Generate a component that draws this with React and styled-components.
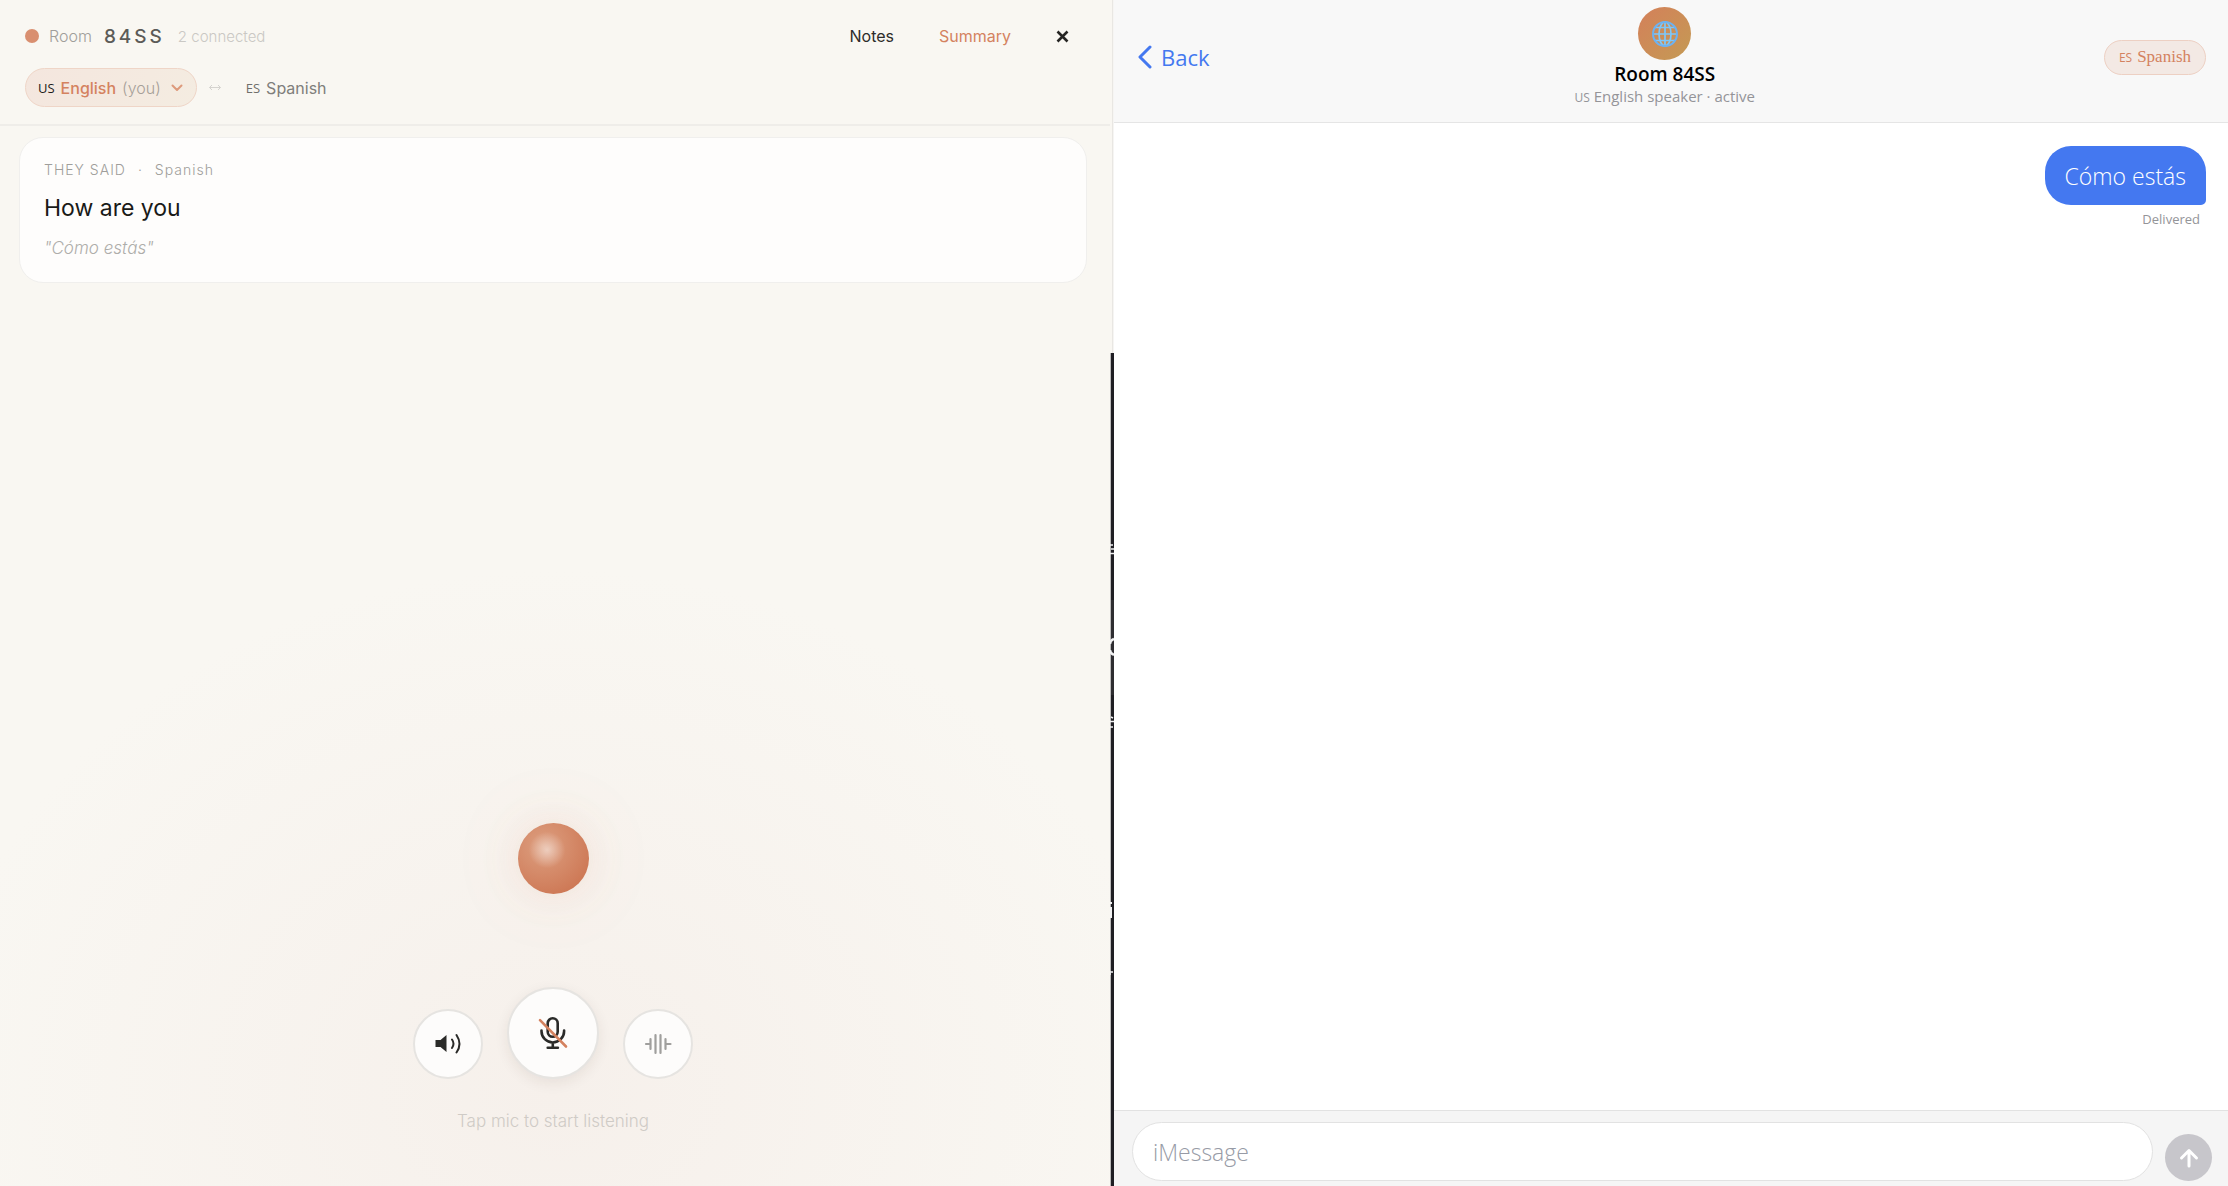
import React from 'react';
import styled, { createGlobalStyle } from 'styled-components';

const GlobalStyle = createGlobalStyle`
    *, *::before, *::after {
        box-sizing: border-box;
    }
    :root {
        --accent: #d4825f;
        --cream: #f9f7f2;
        --blue: #4478f0;
        --ui-font: Inter, "Liberation Sans", sans-serif;
        --phone-font: "Open Sans", "Noto Sans", sans-serif;
    }
    body {
        margin: 0;
    }
    button, input {
        font: inherit;
        color: inherit;
        padding: 0;
        border: none;
        background: none;
    }
    button {
        cursor: pointer;
    }
    svg {
        display: block;
    }
`;

const App = () => {
    return (
        <>
            <GlobalStyle />
            <Split>
                <TranslatorPane />
                <Seam />
                <PhonePane />
            </Split>
        </>
    );
};

const TranslatorPane = () => {
    return (
        <Translator>
            <TopBar>
                <RoomRow>
                    <StatusDot />
                    <RoomLabel>Room</RoomLabel>
                    <RoomCode>84SS</RoomCode>
                    <Connected>2 connected</Connected>
                    <Actions>
                        <TextButton type="button">Notes</TextButton>
                        <TextButton type="button" $accent>Summary</TextButton>
                        <CloseButton type="button" aria-label="Close">
                            <svg width="13" height="13" viewBox="0 0 13 13" fill="none" stroke="currentColor" strokeWidth="2.600">
                                <path d="M1.500 1.500 11.500 11.500M11.500 1.500 1.500 11.500" />
                            </svg>
                        </CloseButton>
                    </Actions>
                </RoomRow>
                <LanguageRow>
                    <LanguagePill type="button">
                        <Flag>US</Flag>
                        <strong>English</strong>
                        <span>(you)</span>
                        <svg width="12" height="8" viewBox="0 0 12 8" fill="none" stroke="currentColor" strokeWidth="2" strokeLinecap="round" strokeLinejoin="round">
                            <path d="M1.500 1.500 6 6l4.500-4.500" />
                        </svg>
                    </LanguagePill>
                    <Swap width="12" height="7" viewBox="0 0 12 7" fill="none" stroke="currentColor">
                        <path d="M.5 3.500h11M3 1 .5 3.500 3 6M9 1l2.500 2.500L9 6" />
                    </Swap>
                    <OtherLanguage>
                        <Flag $muted>ES</Flag>
                        Spanish
                    </OtherLanguage>
                </LanguageRow>
            </TopBar>
            <Feed>
                <Card>
                    <CardMeta>
                        <span>THEY SAID</span>
                        <span>·</span>
                        <span>Spanish</span>
                    </CardMeta>
                    <Translation>How are you</Translation>
                    <Original>"Cómo estás"</Original>
                </Card>
            </Feed>
            <Dock>
                <Orb />
                <Controls>
                    <RoundButton type="button" aria-label="Speaker">
                        <svg width="28" height="22" viewBox="0 0 28 22" fill="none" stroke="currentColor" strokeWidth="2" strokeLinecap="round">
                            <path d="M1.500 7h5l6-5v17l-6-5h-5z" fill="currentColor" stroke="none" />
                            <path d="M18 6.500q3 4.300 0 8.500M22.500 2q6 9 0 17.500" />
                        </svg>
                    </RoundButton>
                    <MicButton type="button" aria-label="Microphone">
                        <svg width="30" height="34" viewBox="0 0 30 34" fill="none" stroke="currentColor" strokeWidth="2.600" strokeLinecap="round">
                            <rect x="9.700" y="2.300" width="10" height="18.400" rx="5" />
                            <path d="M3.500 14.500v.7a11.300 11.300 0 0 0 22.600 0v-.7M14.800 26.500v5M9.700 31.700h10.200" />
                            <path d="M2 4.200 28 30.500" stroke="#d4825f" />
                        </svg>
                    </MicButton>
                    <RoundButton type="button" aria-label="Waveform" $muted>
                        <svg width="28" height="22" viewBox="0 0 28 22" fill="none" stroke="currentColor" strokeWidth="2.200" strokeLinecap="round">
                            <path d="M2 11h4.500M6.500 6v10M11.500 2v18M16.500 2v18M21.500 6v10M21.500 11h5" />
                        </svg>
                    </RoundButton>
                </Controls>
                <Hint>Tap mic to start listening</Hint>
            </Dock>
        </Translator>
    );
};

// the gap between both windows, dark where the desktop shows through
const Seam = () => {
    return (
        <SeamLine aria-hidden="true">
            <svg width="4" height="640" viewBox="0 0 4 640" fill="none" stroke="#f2f2f3">
                <rect x="1" y="247" width="3" height="95" fill="#2e2d31" stroke="none" />
                <path d="M0 192h3M1 196h3M0 200.500h4" strokeWidth="1.500" />
                <path d="M4 286Q0 287.500 0 291M0 297q0 3 4 5" strokeWidth="2.500" />
                <path d="M1 364l2 1M0 368.500h4M0 374h3" strokeWidth="1.500" />
                <path d="M1 549v2M1 554v11" strokeWidth="2" />
                <path d="M0 619h3M0 621h1" strokeWidth="1.500" />
            </svg>
        </SeamLine>
    );
};

const PhonePane = () => {
    return (
        <Phone>
            <PhoneHeader>
                <BackButton type="button">
                    <svg width="14" height="24" viewBox="0 0 14 24" fill="none" stroke="currentColor" strokeWidth="3" strokeLinecap="round" strokeLinejoin="round">
                        <path d="M12 2 2 12l10 10" />
                    </svg>
                    Back
                </BackButton>
                <Contact>
                    <Avatar>
                        <svg width="26" height="26" viewBox="0 0 26 26" fill="none" stroke="#7cc8fb" strokeWidth="1.700">
                            <path d="M13 1v24M1 13h24M3 6.500h20M3 19.500h20" />
                            <ellipse cx="13" cy="13" rx="6" ry="12" />
                            <circle cx="13" cy="13" r="12" stroke="#6cb2f2" strokeWidth="2" />
                        </svg>
                    </Avatar>
                    <ContactName>Room 84SS</ContactName>
                    <ContactStatus><small>US</small> English speaker · active</ContactStatus>
                </Contact>
                <LanguageTag type="button">
                    <small>ES</small>
                    Spanish
                </LanguageTag>
            </PhoneHeader>
            <Messages>
                <Bubble>Cómo estás</Bubble>
                <Receipt>Delivered</Receipt>
            </Messages>
            <Composer>
                <MessageInput type="text" placeholder="iMessage" aria-label="iMessage" />
                <SendButton type="button" aria-label="Send">
                    <svg width="20" height="20" viewBox="0 0 20 20" fill="none" stroke="currentColor" strokeWidth="3" strokeLinecap="round" strokeLinejoin="round">
                        <path d="M10 18V2.500M2.500 10 10 2.500l7.500 7.500" />
                    </svg>
                </SendButton>
            </Composer>
        </Phone>
    );
};

const Split = styled.div`
    display: grid;
    grid-template-columns: calc(50% - 4px) 4px 1fr;
    height: 100vh;
    overflow: hidden;
`;

const SeamLine = styled.div`
    padding-top: 353px;
    background:
        linear-gradient(90deg, #bab9b9 1px, #1f1e23 1px) bottom / 100% calc(100% - 353px) no-repeat,
        linear-gradient(90deg, var(--cream) 2px, #e9e7e3 2px, #e9e7e3 3px, #f6f5f3 3px);
`;

const Translator = styled.main`
    display: flex;
    flex-direction: column;
    min-width: 0;
    font-family: var(--ui-font);
    background: radial-gradient(ellipse 56% 44% at 50% 92%, #f6f0eb, rgba(246, 240, 235, 0) 100%), var(--cream);
`;

const TopBar = styled.header`
    display: flex;
    flex-direction: column;
    gap: 14px;
    padding: 18px 24px 17px 25px;
    border-bottom: 2px solid #efede9;
`;

const RoomRow = styled.div`
    display: flex;
    align-items: center;
    height: 36px;
`;

const StatusDot = styled.span`
    width: 14px;
    height: 14px;
    margin-right: 10px;
    border-radius: 50%;
    background: #d98f70;
`;

const RoomLabel = styled.span`
    margin-right: 12px;
    font-size: 16px;
    font-weight: 300;
    color: #a09e9a;
`;

const RoomCode = styled.strong`
    margin-right: 13px;
    font-size: 19px;
    font-weight: 500;
    letter-spacing: 3px;
    color: #5c5b58;
`;

const Connected = styled.span`
    font-size: 15px;
    font-weight: 300;
    color: #cac8c4;
`;

const Actions = styled.nav`
    display: flex;
    align-items: center;
    gap: 45px;
    margin-left: auto;
    padding-right: 17px;
`;

const TextButton = styled.button`
    font-size: 16px;
    color: ${({ $accent }) => ($accent ? 'var(--accent)' : '#2d2c2a')};
`;

const CloseButton = styled.button`
    color: #262523;
`;

const LanguageRow = styled.div`
    display: flex;
    align-items: center;
    gap: 12px;
`;

const LanguagePill = styled.button`
    display: flex;
    align-items: center;
    gap: 6px;
    height: 39px;
    padding: 0 13px 0 12px;
    border: 1px solid #efd5c7;
    border-radius: 20px;
    background: linear-gradient(120deg, #f4e6de, #f4ece1);
    font-size: 16px;
    font-weight: 300;
    color: #a69f98;
    strong {
        font-weight: 500;
        color: var(--accent);
    }
    svg {
        margin-left: 4px;
        color: #dd9a7c;
    }
`;

const Flag = styled.span`
    font-family: var(--phone-font);
    font-size: 13px;
    font-weight: 400;
    color: ${({ $muted }) => ($muted ? '#6f6e6b' : '#1d1c1a')};
`;

const Swap = styled.svg`
    color: #d5d3cf;
`;

const OtherLanguage = styled.span`
    display: flex;
    align-items: center;
    gap: 6px;
    padding-left: 13px;
    font-size: 16px;
    color: #7f7e7b;
`;

const Feed = styled.section`
    flex: 1;
    min-height: 0;
    padding: 11px 23px 0 19px;
`;

const Card = styled.article`
    padding: 22px 24px;
    border: 1px solid #f0efed;
    border-radius: 24px;
    background: #fefdfc;
`;

const CardMeta = styled.div`
    display: flex;
    gap: 12px;
    font-size: 14px;
    font-weight: 300;
    line-height: 20px;
    letter-spacing: 1px;
    color: #9f9e9b;
`;

const Translation = styled.p`
    margin: 12px 0;
    font-size: 23px;
    line-height: 32px;
    color: #1a1a18;
`;

const Original = styled.p`
    margin: 0;
    font-size: 17px;
    font-style: italic;
    font-weight: 300;
    line-height: 24px;
    color: #aeadaa;
`;

const Dock = styled.section`
    display: flex;
    flex-direction: column;
    align-items: center;
    padding: 0 23px 53px 19px;
`;

const Orb = styled.div`
    width: 71px;
    height: 71px;
    margin-bottom: 93px;
    border-radius: 50%;
    background:
        radial-gradient(circle at 41% 38%, rgba(255, 255, 255, .5), rgba(255, 255, 255, 0) 30%),
        radial-gradient(circle at 35% 32%, #dd9f80, #cd7754 80%);
    box-shadow: 0 0 40px rgba(212, 130, 95, .12), 0 0 90px rgba(212, 130, 95, .08);
`;

const Controls = styled.div`
    display: flex;
    align-items: flex-end;
    gap: 24px;
    margin-bottom: 30px;
`;

const RoundButton = styled.button`
    display: grid;
    place-items: center;
    width: 70px;
    height: 70px;
    border: 2px solid #e6e4e1;
    border-radius: 50%;
    background: #fdfcfb;
    color: ${({ $muted }) => ($muted ? '#a09f9d' : '#2a2a28')};
`;

const MicButton = styled(RoundButton)`
    width: 92px;
    height: 92px;
    box-shadow: 0 4px 14px rgba(60, 40, 30, .08);
`;

const Hint = styled.p`
    margin: 0;
    font-size: 17px;
    font-weight: 300;
    line-height: 24px;
    color: #cfcbc6;
`;

const Phone = styled.section`
    display: flex;
    flex-direction: column;
    min-width: 0;
    font-family: var(--phone-font);
    background: #fff;
`;

const PhoneHeader = styled.header`
    display: flex;
    align-items: center;
    justify-content: space-between;
    padding: 7px 22px 15px 24px;
    border-bottom: 1px solid #e5e5e5;
    background: #f8f8f8;
`;

const BackButton = styled.button`
    display: flex;
    align-items: center;
    gap: 9px;
    padding-right: 16px;
    font-size: 22px;
    color: var(--blue);
`;

const Contact = styled.div`
    display: flex;
    flex-direction: column;
    align-items: center;
`;

const Avatar = styled.div`
    display: grid;
    place-items: center;
    width: 53px;
    height: 53px;
    border-radius: 50%;
    background: linear-gradient(135deg, #d4805a, #c49a54);
`;

const ContactName = styled.h1`
    margin: 2px 0 0;
    font-size: 19px;
    font-weight: 600;
    line-height: 24px;
    color: #000;
`;

const ContactStatus = styled.p`
    margin: 0;
    font-size: 15px;
    line-height: 21px;
    color: #949498;
    small {
        font-size: 12px;
        line-height: 1;
    }
`;

const LanguageTag = styled.button`
    display: flex;
    align-items: center;
    gap: 5px;
    height: 35px;
    padding: 0 14px;
    border: 1px solid #edd0c3;
    border-radius: 18px;
    background: #f3e9e4;
    font-family: "Liberation Serif", serif;
    font-size: 17px;
    color: var(--accent);
    small {
        font-family: var(--phone-font);
        font-size: 12px;
    }
`;

const Messages = styled.div`
    flex: 1;
    display: flex;
    flex-direction: column;
    align-items: flex-end;
    padding: 23px 22px;
`;

const Bubble = styled.p`
    margin: 0;
    padding: 14px 20px 12px;
    border-radius: 26px 26px 5px 26px;
    background: var(--blue);
    font-size: 23px;
    font-weight: 300;
    line-height: 33px;
    color: #fff;
`;

const Receipt = styled.span`
    padding: 4px 6px;
    font-size: 13px;
    line-height: 20px;
    color: #949498;
`;

const Composer = styled.form`
    display: flex;
    align-items: flex-end;
    gap: 12px;
    padding: 11px 16px 5px 18px;
    border-top: 1px solid #e2e2e2;
    background: #f5f5f5;
`;

const MessageInput = styled.input`
    flex: 1;
    min-width: 0;
    height: 59px;
    padding: 0 20px;
    border: 1px solid #e2e2e2;
    border-radius: 30px;
    background: #fff;
    font-size: 23px;
    font-weight: 300;
    &::placeholder {
        color: #979ba6;
    }
`;

const SendButton = styled.button`
    display: grid;
    place-items: center;
    width: 47px;
    height: 47px;
    border-radius: 50%;
    background: #c7c6cb;
    color: #fff;
`;

export default App;
